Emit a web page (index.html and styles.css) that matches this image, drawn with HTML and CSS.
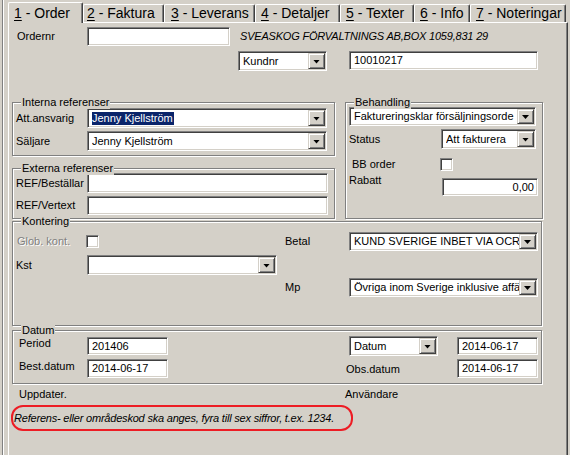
FILE: index.html
```html
<!DOCTYPE html>
<html>
<head>
<meta charset="utf-8">
<title>Order</title>
<link rel="stylesheet" href="styles.css">
</head>
<body>
<div class="frame">
  <div class="tabs">
    <div class="tab active"><u>1</u> - Order</div>
    <div class="tab"><u>2</u> - Faktura</div>
    <div class="tab"><u>3</u> - Leverans</div>
    <div class="tab"><u>4</u> - Detaljer</div>
    <div class="tab"><u>5</u> - Texter</div>
    <div class="tab"><u>6</u> - Info</div>
    <div class="tab"><u>7</u> - Noteringar</div>
  </div>
  <div class="page">
    <div class="row r-order">
      <span class="lbl l-order">Ordernr</span>
      <span class="field f-order"></span>
      <span class="company">SVEASKOG FÖRVALTNINGS AB,BOX 1059,831 29</span>
    </div>
    <div class="row r-kund">
      <span class="field combo c-kund"><span class="txt">Kundnr</span><span class="btn"></span></span>
      <span class="field f-kund"><span class="txt">10010217</span></span>
    </div>

    <div class="middle">
      <div class="leftcol">
        <div class="group g-interna">
          <span class="gtitle">Interna referenser</span>
          <div class="row">
            <span class="lbl l-ref">Att.ansvarig</span>
            <span class="field combo c-ref"><span class="txt"><span class="sel">Jenny Kjellström</span></span><span class="btn"></span></span>
          </div>
          <div class="row gap3">
            <span class="lbl l-ref">Säljare</span>
            <span class="field combo c-ref"><span class="txt">Jenny Kjellström</span><span class="btn"></span></span>
          </div>
        </div>
        <div class="group g-externa">
          <span class="gtitle">Externa referenser</span>
          <div class="row">
            <span class="lbl l-ref">REF/Beställar</span>
            <span class="field f-ext"></span>
          </div>
          <div class="row gap3">
            <span class="lbl l-ref">REF/Vertext</span>
            <span class="field f-ext f-ext2"></span>
          </div>
        </div>
      </div>

      <div class="group g-beh">
        <span class="gtitle">Behandling</span>
        <div class="row">
          <span class="field combo c-beh"><span class="txt">Faktureringsklar försäljningsorde</span><span class="btn"></span></span>
        </div>
        <div class="row r-status">
          <span class="lbl l-status">Status</span>
          <span class="field combo c-status"><span class="txt">Att fakturera</span><span class="btn"></span></span>
        </div>
        <div class="row r-bb">
          <span class="lbl l-bb">BB order</span>
          <span class="check"></span>
        </div>
        <div class="row r-rabatt">
          <span class="lbl l-rabatt">Rabatt</span>
          <span class="field f-rabatt"><span class="txt num">0,00</span></span>
        </div>
      </div>
    </div>

    <div class="group g-kont">
      <span class="gtitle">Kontering</span>
      <div class="kcols">
        <div class="kleft">
          <div class="row r-glob">
            <span class="lbl l-glob disabled">Glob. kont.</span>
            <span class="check"></span>
          </div>
          <div class="row r-kst">
            <span class="lbl l-kst">Kst</span>
            <span class="field combo c-kst"><span class="txt"></span><span class="btn"></span></span>
          </div>
        </div>
        <div class="kright">
          <div class="row r-betal">
            <span class="lbl l-betal">Betal</span>
            <span class="field combo c-betal"><span class="txt">KUND SVERIGE INBET VIA OCR</span><span class="btn"></span></span>
          </div>
          <div class="row r-mp">
            <span class="lbl l-betal">Mp</span>
            <span class="field combo c-betal c-mp"><span class="txt">Övriga inom Sverige inklusive affä</span><span class="btn"></span></span>
          </div>
        </div>
      </div>
    </div>

    <div class="group g-datum">
      <span class="gtitle">Datum</span>
      <div class="row r-d1">
        <span class="lbl l-datum">Period</span>
        <span class="field f-date"><span class="txt">201406</span></span>
        <span class="field combo c-datum"><span class="txt">Datum</span><span class="btn"></span></span>
        <span class="field f-date f-date-r"><span class="txt">2014-06-17</span></span>
      </div>
      <div class="row r-d2">
        <span class="lbl l-datum">Best.datum</span>
        <span class="field f-date"><span class="txt">2014-06-17</span></span>
        <span class="lbl l-obs">Obs.datum</span>
        <span class="field f-date"><span class="txt">2014-06-17</span></span>
      </div>
    </div>

    <div class="row r-upd">
      <span class="lbl l-upd">Uppdater.</span>
      <span class="lbl">Användare</span>
    </div>

    <div class="hint">Referens- eller områdeskod ska anges, fyra till sex siffror, t.ex. 1234.</div>
  </div>
</div>
</body>
</html>
```

FILE: styles.css
```css
html, body {
  margin: 0;
  padding: 0;
  background: #d4d0c8;
}
body {
  width: 570px;
  height: 455px;
  overflow: hidden;
  font-family: "Liberation Sans", Arial, sans-serif;
  font-size: 11px;
  line-height: 13px;
  color: #000;
}

.frame {
  margin-left: 2px;
  height: 455px;
  border-left: 1px solid #808080;
  box-shadow: inset 1px 0 #ffffff;
  padding-left: 5px;
}

/* ---------- tabs ---------- */
.tabs {
  display: flex;
  align-items: flex-end;
  height: 22px;
}
.tab {
  box-sizing: border-box;
  flex: none;
  height: 18px;
  padding-left: 5px;
  border-top: 1px solid #fff;
  border-left: 1px solid #fff;
  border-right: 1px solid #404040;
  box-shadow: inset -1px 0 #808080;
  border-radius: 2px 2px 0 0;
  font-size: 14px;
  line-height: 16px;
  white-space: nowrap;
}
.tab u { text-underline-offset: 2px; }
.tab.active {
  height: 21px;
  margin-bottom: -1px;
  padding-top: 2px;
  background: #d4d0c8;
  position: relative;
  z-index: 1;
}
.tab:nth-child(1) { width: 75px; }
.tab:nth-child(2) { width: 81px; padding-left: 3px; }
.tab:nth-child(3) { width: 91px; padding-left: 6px; }
.tab:nth-child(4) { width: 85px; }
.tab:nth-child(5) { width: 74px; }
.tab:nth-child(6) { width: 56px; }
.tab:nth-child(7) { width: 96px; }

/* ---------- page ---------- */
.page {
  box-sizing: border-box;
  width: 560px;
  height: 433px;
  border-top: 1px solid #fff;
  border-left: 1px solid #fff;
  border-right: 1px solid #404040;
  box-shadow: inset -1px 0 #808080;
  padding-left: 3px;
}

.row {
  display: flex;
  align-items: center;
}
.lbl {
  flex: none;
  white-space: nowrap;
}
.gap3 { margin-top: 3px; }

/* ---------- controls ---------- */
.field {
  box-sizing: border-box;
  flex: none;
  display: flex;
  align-items: center;
  height: 20px;
  background: #fff;
  border: 1px solid;
  border-color: #808080 #fff #fff #808080;
  box-shadow: inset 1px 1px #404040, inset -1px -1px #d4d0c8;
  padding: 0 2px 0 4px;
  overflow: hidden;
}
.field .txt {
  flex: 1;
  min-width: 0;
  white-space: nowrap;
  overflow: hidden;
}
.field .num { text-align: right; padding-right: 1px; }
.combo { padding-right: 1px; }
.btn {
  box-sizing: border-box;
  flex: none;
  width: 17px;
  height: 16px;
  display: flex;
  align-items: center;
  justify-content: center;
  background: #d4d0c8;
  border: 1px solid;
  border-color: #d4d0c8 #404040 #404040 #d4d0c8;
  box-shadow: inset 1px 1px #fff, inset -1px -1px #808080;
}
.btn::after {
  content: "";
  width: 7px;
  height: 4px;
  margin-top: 1px;
  background: #000;
  clip-path: polygon(0 0, 100% 0, 50% 100%);
}
.sel {
  background: #0a246a;
  color: #fff;
  padding: 1px 1px 1px 0;
}
.check {
  box-sizing: border-box;
  flex: none;
  width: 13px;
  height: 13px;
  background: #fff;
  border: 1px solid;
  border-color: #808080 #fff #fff #808080;
  box-shadow: inset 1px 1px #404040, inset -1px -1px #d4d0c8;
}
.disabled {
  color: #808080;
  text-shadow: 1px 1px 0 #fff;
}

/* ---------- group boxes ---------- */
.group {
  box-sizing: border-box;
  position: relative;
  border: 1px solid #808080;
  box-shadow: inset 1px 1px 0 #fff, 1px 1px 0 #fff;
}
.gtitle {
  position: absolute;
  top: -7px;
  left: 8px;
  padding: 0 1px;
  background: #d4d0c8;
  line-height: 13px;
}

/* ---------- rows ---------- */
.r-order { margin-top: 4px; }
.l-order { width: 75px; padding-left: 5px; box-sizing: border-box; }
.f-order { width: 143px; height: 19px; }
.company { margin-left: 10px; font-style: italic; white-space: nowrap; letter-spacing: -0.2px; }

.r-kund { margin-top: 5px; align-items: flex-start; }
.c-kund { margin-left: 226px; width: 89px; }
.f-kund { margin-left: 22px; width: 189px; height: 19px; }

.middle {
  display: flex;
  align-items: flex-start;
  margin-top: 31px;
}
.leftcol { width: 323px; flex: none; }
.g-interna { height: 54px; padding: 5px 0 0 3px; }
.g-externa { height: 51px; margin-top: 12px; padding: 4px 0 0 3px; }
.l-ref { width: 71px; }
.c-ref { width: 240px; }
.f-ext { width: 241px; }
.f-ext2 { height: 19px; }

.g-beh {
  flex: none;
  margin-left: 10px;
  width: 198px;
  height: 117px;
  padding: 4px 0 0 3px;
}
.c-beh { width: 187px; height: 19px; }
.c-beh .btn { height: 15px; }
.r-status { margin-top: 3px; }
.l-status { width: 92px; }
.c-status { width: 95px; }
.r-bb { margin-top: 9px; }
.l-bb { width: 91px; padding-left: 3px; box-sizing: border-box; }
.r-rabatt { margin-top: 7px; align-items: flex-start; }
.l-rabatt { width: 93px; margin-top: -4px; }
.f-rabatt { width: 96px; height: 18px; }

.g-kont {
  margin-top: 2px;
  width: 530px;
  height: 105px;
}
.kcols { display: flex; align-items: flex-start; }
.kleft { width: 272px; flex: none; padding-left: 3px; box-sizing: border-box; }
.r-glob { margin-top: 10px; height: 19px; }
.l-glob { width: 70px; padding-left: 1px; box-sizing: border-box; }
.r-kst { margin-top: 4px; }
.l-kst { width: 71px; }
.c-kst { width: 190px; }
.r-betal { margin-top: 10px; }
.l-betal { width: 64px; }
.c-betal { width: 189px; height: 19px; }
.c-betal .btn { height: 15px; }
.r-mp { margin-top: 27px; }

.g-datum {
  margin-top: 4px;
  width: 530px;
  height: 54px;
}
.r-d1 { margin-top: 5px; align-items: flex-start; }
.r-d2 { margin-top: 3px; align-items: flex-start; }
.l-datum { width: 74px; padding-left: 6px; box-sizing: border-box; margin-top: 1px; }
.f-date { width: 81px; height: 19px; }
.r-d1 .f-date { margin-top: 1px; height: 18px; }
.c-datum { margin-left: 181px; width: 89px; }
.f-date-r { margin-left: 19px; }
.l-obs { width: 111px; margin-left: 178px; margin-top: 4px; }

.r-upd { margin-top: 4px; }
.l-upd { width: 333px; padding-left: 7px; box-sizing: border-box; }

.hint {
  box-sizing: border-box;
  margin: 4px 0 0 -1px;
  width: 342px;
  height: 26px;
  border: 2px solid #ed1c24;
  border-radius: 12px;
  padding: 5px 0 0 1px;
  font-style: italic;
  white-space: nowrap;
  letter-spacing: -0.2px;
}
```
